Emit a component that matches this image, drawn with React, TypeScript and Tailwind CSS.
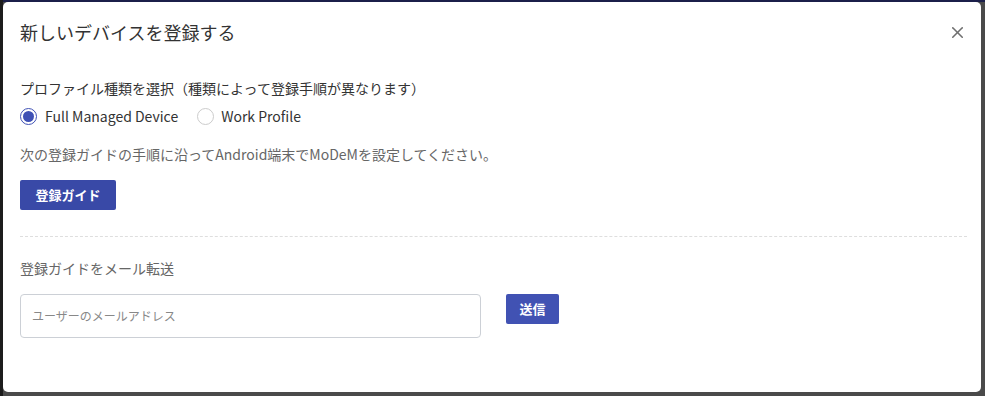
import { X } from 'lucide-react';

export default function App() {
  return (
    <div className="w-[985px] h-[396px] bg-[#4a4a4a] flex flex-col overflow-hidden" style={{ fontFamily: '"Noto Sans CJK JP", "Noto Sans", sans-serif' }}>
      <div className="flex flex-1">
        <div className="w-[3px] bg-[#1c1c1c]" />
        <div className="flex flex-col flex-1">
          <div className="h-[2px] bg-[#1b1f4a]" />
          <div className="w-[978px] h-[390px] bg-white rounded-[5px] flex flex-col">
            <div className="flex items-center justify-between pl-[17px] pr-[14px] h-[60px]">
              <h2 className="text-[18px] text-[#333] font-normal">新しいデバイスを登録する</h2>
              <X className="w-[19px] h-[19px] text-[#6f6f6f]" strokeWidth={2} />
            </div>

            <div className="px-[17px] pt-[15px]">
              <p className="text-[14px] text-[#333] leading-[22px]">プロファイル種類を選択（種類によって登録手順が異なります）</p>
              <div className="flex items-center mt-[6px] h-[22px] text-[14px] text-[#333]">
                <label className="flex items-center gap-[8px]">
                  <span className="w-[17px] h-[17px] rounded-full border-[1.5px] border-[#3f51b5] flex items-center justify-center">
                    <span className="w-[11px] h-[11px] rounded-full bg-[#3f51b5]" />
                  </span>
                  Full Managed Device
                </label>
                <label className="flex items-center gap-[7px] ml-[19px]">
                  <span className="w-[17px] h-[17px] rounded-full border border-[#ccc]" />
                  Work Profile
                </label>
              </div>
              <p className="mt-[16px] text-[14px] text-[#666] leading-[22px]">次の登録ガイドの手順に沿ってAndroid端末でMoDeMを設定してください。</p>
              <button className="mt-[15px] w-[96px] h-[30px] bg-[#3949a7] text-white text-[13px] font-bold rounded-[2px]">登録ガイド</button>

              <div className="mt-[26px] mr-[-3px] border-t border-dashed border-[#dedede]" />

              <p className="mt-[20px] text-[14px] text-[#666] leading-[22px]">登録ガイドをメール転送</p>
              <div className="flex items-start mt-[15px]">
                <div className="w-[461px] h-[44px] border border-[#ccd0d6] rounded-[4px] flex items-center pl-[11px] text-[12px] text-[#888]">
                  ユーザーのメールアドレス
                </div>
                <button className="ml-[25px] w-[53px] h-[30px] bg-[#4152b3] text-white text-[13px] font-bold rounded-[2px]">送信</button>
              </div>
            </div>
          </div>
        </div>
      </div>
    </div>
  );
}
